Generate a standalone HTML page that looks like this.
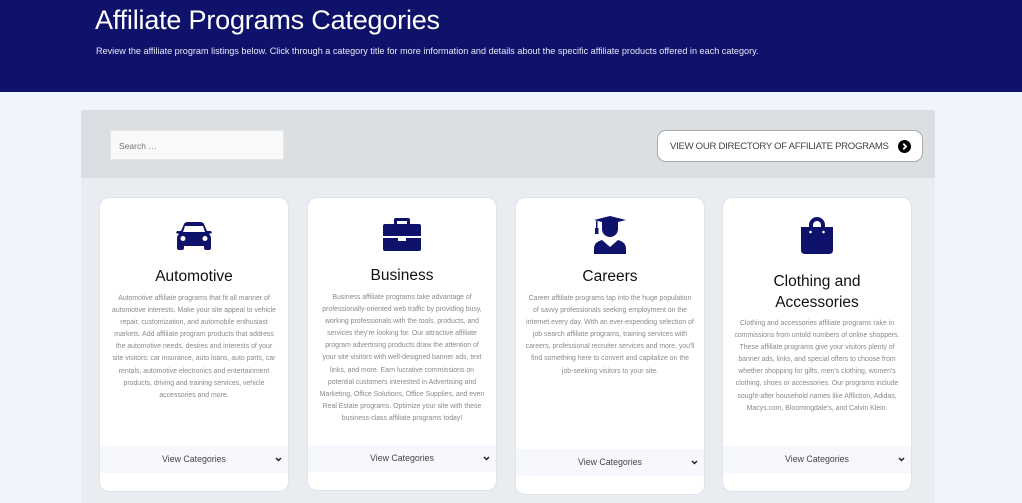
<!DOCTYPE html>
<html><head><meta charset="utf-8"><style>
*{margin:0;padding:0;box-sizing:border-box}
body{width:1022px;height:503px;overflow:hidden;background:#f0f4fd;font-family:"Liberation Sans",sans-serif;position:relative}
.hdr{position:absolute;left:0;top:0;width:1022px;height:92px;background:#0e126b}
.hdr h1{position:absolute;left:95px;top:5px;font-weight:400;font-size:27px;color:#fff;letter-spacing:-0.2px}
.hdr p{position:absolute;left:96px;top:46px;font-size:9.1px;color:#e6e8f5}
.panel{position:absolute;left:81px;top:110px;width:854px;height:393px;background:#e9edf2}
.band{position:absolute;left:81px;top:110px;width:854px;height:68px;background:#dadfe3}
.search{position:absolute;left:110px;top:130px;width:174px;height:30px;background:#f9f9f9;border:1px solid #e6e6e6;font-size:8.5px;color:#777;padding:10px 8px}
.btn{position:absolute;left:657px;top:130px;width:266px;height:32px;background:#fff;border:1px solid #aaa;border-radius:9px;font-size:9.6px;color:#444;padding:10px 0 0 12px;letter-spacing:-0.3px;white-space:nowrap}
.btn i{position:absolute;right:11px;top:9px;width:13px;height:13px;border-radius:50%;background:#000}
.card{position:absolute;top:197px;width:190px;background:#fff;border:1px solid #dfe3ea;border-radius:10px}
.card svg{position:absolute;left:50%;transform:translateX(-50%)}
.card h2{position:absolute;left:0;width:100%;text-align:center;font-weight:400;font-size:15.5px;color:#111;line-height:21px}
.card p{position:absolute;left:0;right:0;text-align:center;font-size:6.9px;line-height:12.1px;color:#8a8a8a;white-space:nowrap}
.foot{position:absolute;left:0;width:100%;height:27px;background:#f6f8fd;text-align:center;font-size:8.8px;color:#444;line-height:27px}
.foot svg{position:absolute;left:auto!important;right:6px;top:11px;transform:none!important}
</style></head><body>
<div class="hdr"><h1>Affiliate Programs Categories</h1><p>Review the affiliate program listings below. Click through a category title for more information and details about the specific affiliate products offered in each category.</p></div>
<div class="panel"></div><div class="band"></div>
<div class="search">Search …</div>
<div class="btn">VIEW OUR DIRECTORY OF AFFILIATE PROGRAMS<i><svg width="13" height="13" viewBox="0 0 13 13" style="position:absolute;left:0;top:0"><path d="M5.3 3.6 L8 6.5 L5.3 9.4" stroke="#fff" stroke-width="1.8" fill="none"/></svg></i></div>

<div class="card" style="left:99px;height:295px">
<svg style="top:24px" width="38" height="28" viewBox="0 0 38 28"><path d="M9 2 Q10 0 13 0 H25 Q28 0 29 2 L32 9 H36 L37 11 L34 12 Q36 14 36 16 V26 Q36 28 34 28 H31 Q29 28 29 26 V24 H9 V26 Q9 28 7 28 H4 Q2 28 2 26 V16 Q2 14 4 12 L1 11 L2 9 H6 Z M10 4 L8 10 H30 L28 4 Z" fill="#0e126b"/><circle cx="8" cy="16.5" r="2.5" fill="#fff"/><circle cx="30" cy="16.5" r="2.5" fill="#fff"/></svg>
<h2 style="top:68px">Automotive</h2>
<p style="top:95px">Automotive affiliate programs that fit all manner of<br>automotive interests. Make your site appeal to vehicle<br>repair, customization, and automobile enthusiast<br>markets. Add affiliate program products that address<br>the automotive needs, desires and interests of your<br>site visitors: car insurance, auto loans, auto parts, car<br>rentals, automotive electronics and entertainment<br>products, driving and training services, vehicle<br>accessories and more.</p>
<div class="foot" style="top:248px">View Categories<svg width="7" height="5" viewBox="0 0 7 5"><path d="M1 1 L3.5 3.5 L6 1" stroke="#222" stroke-width="1.5" fill="none"/></svg></div></div>

<div class="card" style="left:307px;height:294px">
<svg style="top:19px" width="38" height="34" viewBox="0 0 38 34"><path d="M13 1 H25 Q27 1 27 3 V7 H36 Q38 7 38 9 V19 H0 V9 Q0 7 2 7 H11 V3 Q11 1 13 1 Z M14 4 V7 H24 V4 Z M0 21 H15 V24 H23 V21 H38 V32 Q38 34 36 34 H2 Q0 34 0 32 Z" fill="#0e126b"/></svg>
<h2 style="top:67px">Business</h2>
<p style="top:94px">Business affiliate programs take advantage of<br>professionally-oriented web traffic by providing busy,<br>working professionals with the tools, products, and<br>services they're looking for. Our attractive affiliate<br>program advertising products draw the attention of<br>your site visitors with well-designed banner ads, text<br>links, and more. Earn lucrative commissions on<br>potential customers interested in Advertising and<br>Marketing, Office Solutions, Office Supplies, and even<br>Real Estate programs. Optimize your site with these<br>business-class affiliate programs today!</p>
<div class="foot" style="top:247px">View Categories<svg width="7" height="5" viewBox="0 0 7 5"><path d="M1 1 L3.5 3.5 L6 1" stroke="#222" stroke-width="1.5" fill="none"/></svg></div></div>

<div class="card" style="left:515px;height:298px">
<svg style="top:18px" width="34" height="38" viewBox="0 0 34 38"><path d="M1 4 L17 0 L33 4 L17 8 Z" fill="#0e126b"/><rect x="3" y="5" width="1.5" height="9" fill="#0e126b"/><rect x="2" y="12" width="3.5" height="6" fill="#0e126b"/><path d="M9 6 H25 V13 A8 8 0 0 1 9 13 Z" fill="#0e126b"/><path d="M1 38 V33 Q1 26 9 24 L17 31 L25 24 Q33 26 33 33 V38 Z" fill="#0e126b"/></svg>
<h2 style="top:68px">Careers</h2>
<p style="top:95px">Career affiliate programs tap into the huge population<br>of savvy professionals seeking employment on the<br>internet every day. With an ever-expending selection of<br>job search affiliate programs, training services with<br>careers, professional recruiter services and more, you'll<br>find something here to convert and capitalize on the<br>job-seeking visitors to your site.</p>
<div class="foot" style="top:251px">View Categories<svg width="7" height="5" viewBox="0 0 7 5"><path d="M1 1 L3.5 3.5 L6 1" stroke="#222" stroke-width="1.5" fill="none"/></svg></div></div>

<div class="card" style="left:722px;height:295px">
<svg style="top:18px" width="34" height="38" viewBox="0 0 34 38"><path d="M9 11 V9 A8 8 0 0 1 25 9 V11 H21 V9 A4 4 0 0 0 13 9 V11 Z" fill="#0e126b"/><path d="M1 11 H33 V34 Q33 38 29 38 H5 Q1 38 1 34 Z" fill="#0e126b"/><circle cx="10.5" cy="16" r="1.3" fill="#fff"/><circle cx="23.5" cy="16" r="1.3" fill="#fff"/></svg>
<h2 style="top:73px">Clothing and<br>Accessories</h2>
<p style="top:120px">Clothing and accessories affiliate programs rake in<br>commissions from untold numbers of online shoppers.<br>These affiliate programs give your visitors plenty of<br>banner ads, links, and special offers to choose from<br>whether shopping for gifts, men's clothing, women's<br>clothing, shoes or accessories. Our programs include<br>sought-after household names like Affliction, Adidas,<br>Macys.com, Bloomingdale's, and Calvin Klein.</p>
<div class="foot" style="top:248px">View Categories<svg width="7" height="5" viewBox="0 0 7 5"><path d="M1 1 L3.5 3.5 L6 1" stroke="#222" stroke-width="1.5" fill="none"/></svg></div></div>
</body></html>
